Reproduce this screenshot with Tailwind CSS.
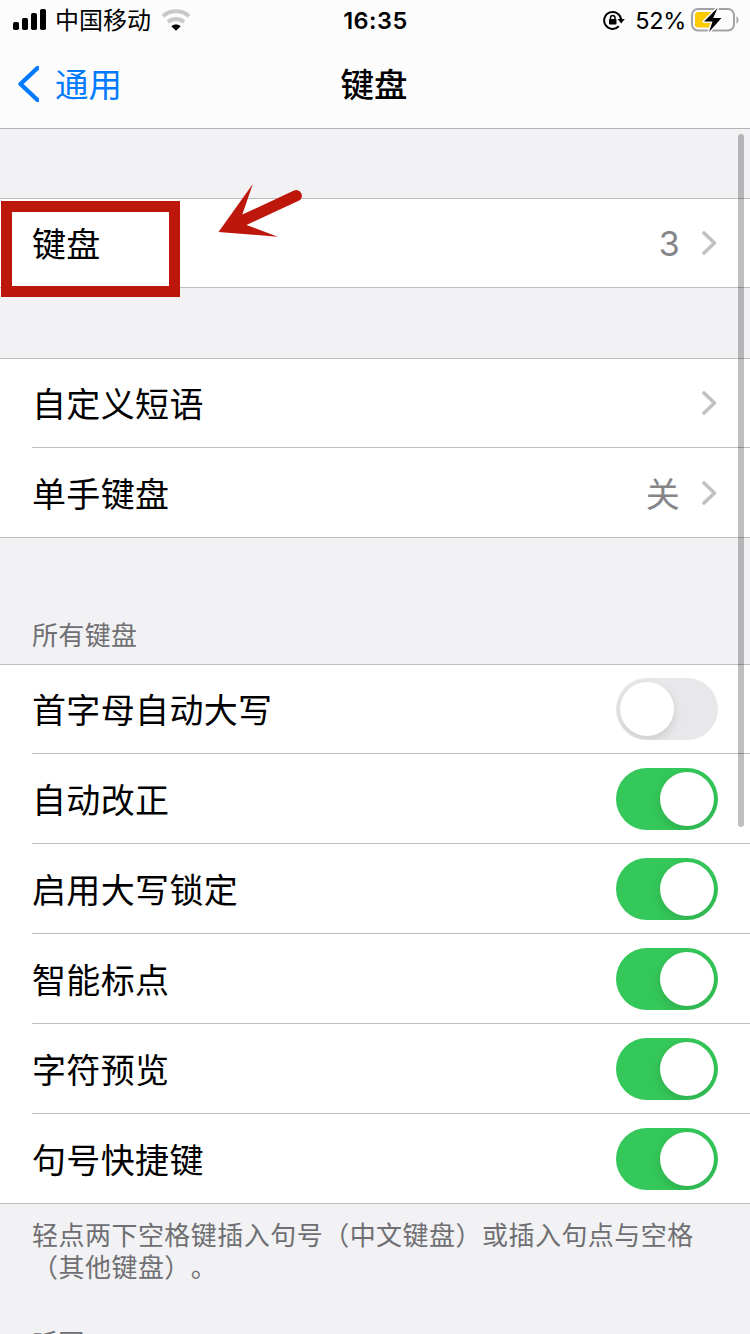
<!DOCTYPE html>
<html lang="zh-CN">
<head>
    <meta charset="UTF-8">
    <meta name="viewport" content="width=device-width, initial-scale=1.0">
    <title>键盘</title>
    <script src="https://cdn.jsdelivr.net/npm/@tailwindcss/browser@4"></script>
    <style>
        body {
            font-family: Inter, 'Noto Sans CJK SC', sans-serif;
            text-spacing-trim: space-all;
        }
    </style>
</head>
<body class="bg-[#f2f2f4] text-black">
    <div class="relative w-[750px] h-[1334px] overflow-hidden">

        <header class="h-[129px] bg-[#fcfcfd] border-b border-[#b2b2b4]">
            <!-- Status bar -->
            <div class="grid grid-cols-3 h-10 pl-3 pr-[11px] items-center">
                <div class="flex items-center">
                    <svg class="w-[34px] h-[22px]" viewBox="0 0 34 22">
                        <rect x="1" y="13" width="6" height="8" rx="1.8"/>
                        <rect x="10" y="9" width="6" height="12" rx="1.8"/>
                        <rect x="19" y="4" width="6" height="17" rx="1.8"/>
                        <rect x="28" y="0" width="6" height="21" rx="1.8"/>
                    </svg>
                    <span class="ml-[9px] pt-0.5 text-[24px] leading-[38px] whitespace-nowrap">中国移动</span>
                    <svg class="ml-[10px] w-[30px] h-[22px]" viewBox="0 0 30 22" fill="none">
                        <path d="M2 7.2C9.5 .6 20.5 .6 28 7.2" stroke="#c9c9ca" stroke-width="4"/>
                        <path d="M7 13C11.8 9 18.2 9 23 13" stroke="#c9c9ca" stroke-width="3.8"/>
                        <path d="M10.3 17.2C12.8 14.9 17.2 14.9 19.7 17.2L15 21.8Z" fill="#000"/>
                    </svg>
                </div>
                <div class="pt-0.5 text-center text-[23.5px] font-semibold leading-[38px] tracking-[0.5px]">16:35</div>
                <div class="flex items-center justify-end">
                    <svg class="w-[22px] h-[20px]" viewBox="0 0 22 20" fill="none">
                        <path d="M15.8 16.3A8.5 8.5 0 1 1 18.1 9.5" stroke="#000" stroke-width="2"/>
                        <path d="M14.6 9H21.8L18.2 13.6Z" fill="#000"/>
                        <rect x="6" y="9" width="7.5" height="5.5" rx=".8" fill="#000"/>
                        <path d="M7.5 9.5V7.7a2.25 2.25 0 0 1 4.5 0V9.5" stroke="#000" stroke-width="1.5"/>
                    </svg>
                    <span class="ml-[10px] pt-0.5 text-[23.5px] leading-[38px] tracking-[-0.3px]">52%</span>
                    <svg class="ml-[5px] w-[48px] h-[26px]" viewBox="0 0 48 26">
                        <rect x="1" y="2" width="42" height="21.5" rx="6" fill="none" stroke="#a3a3a5" stroke-width="2"/>
                        <rect x="4" y="5" width="18" height="15.5" rx="3" fill="#fecb02"/>
                        <path d="M45.5 9.2c2.6 1.5 2.6 6 0 7.5z" fill="#a3a3a5"/>
                        <path d="M26.5 1L13 14.5h8.5L18 25 30.5 11h-8.3z" fill="#000" stroke="#fcfcfd" stroke-width="3" stroke-linejoin="round" paint-order="stroke"/>
                    </svg>
                </div>
            </div>
            <!-- Nav bar -->
            <div class="grid grid-cols-3 h-[88px] items-center">
                <div class="flex items-center pl-[15px] text-[#007aff]">
                    <svg class="w-6 h-[38px]" viewBox="0 0 24 38" fill="none" stroke="currentColor" stroke-width="4.4" stroke-linecap="round" stroke-linejoin="round">
                        <path d="M22.5 3L5.5 19 22.5 35"/>
                    </svg>
                    <span class="ml-4 pt-0.5 text-[33.5px]">通用</span>
                </div>
                <h1 class="pt-0.5 pr-0.5 text-center text-[33.5px] font-medium">键盘</h1>
            </div>
        </header>

        <main class="text-[34px] tracking-[0.35px]">
            <section class="mt-[69px] bg-white">
                <div class="flex items-center justify-between h-[90px] pl-8 pr-[33px] border-y border-[#bebec1]">
                    <span class="pt-0.5">键盘</span>
                    <div class="flex items-center text-[#858588]">
                        <span>3</span>
                        <svg class="ml-[21px] w-4 h-[26px]" viewBox="0 0 16 26" fill="none" stroke="#c1c1c3" stroke-width="3.6" stroke-linecap="round" stroke-linejoin="round">
                            <path d="M3 3L13.5 13 3 23"/>
                        </svg>
                    </div>
                </div>
            </section>

            <section class="mt-[70px] bg-white">
                <div class="h-[90px] pl-8 border-t border-[#bebec1]">
                    <div class="flex items-center justify-between h-full pr-[33px] border-b border-[#bebec1]">
                        <span class="pt-0.5">自定义短语</span>
                        <svg class="w-4 h-[26px]" viewBox="0 0 16 26" fill="none" stroke="#c1c1c3" stroke-width="3.6" stroke-linecap="round" stroke-linejoin="round">
                            <path d="M3 3L13.5 13 3 23"/>
                        </svg>
                    </div>
                </div>
                <div class="flex items-center justify-between h-[90px] pl-8 pt-px pr-[33px] border-b border-[#bebec1]">
                    <span class="pt-0.5">单手键盘</span>
                    <div class="flex items-center text-[#858588]">
                        <span class="pt-0.5">关</span>
                        <svg class="ml-[21px] w-4 h-[26px]" viewBox="0 0 16 26" fill="none" stroke="#c1c1c3" stroke-width="3.6" stroke-linecap="round" stroke-linejoin="round">
                            <path d="M3 3L13.5 13 3 23"/>
                        </svg>
                    </div>
                </div>
            </section>

            <h2 class="mt-[78px] h-12 pl-8 pt-px text-[26px] leading-[38px] text-[#6f6f73]">所有键盘</h2>

            <section class="bg-white">
                <div class="h-[90px] pl-8 border-t border-[#bebec1]">
                    <div class="flex items-center justify-between h-full pr-8 border-b border-[#bebec1]">
                        <span class="pt-0.5">首字母自动大写</span>
                        <div class="flex w-[102px] h-[62px] p-1 rounded-full overflow-hidden bg-[#e8e8ea]">
                            <div class="size-[54px] rounded-full bg-white shadow-[0_4px_10px_rgba(0,0,0,0.12)]"></div>
                        </div>
                    </div>
                </div>
                <div class="h-[90px] pl-8 pt-px">
                    <div class="flex items-center justify-between h-full pr-8 border-b border-[#bebec1]">
                        <span class="pt-0.5">自动改正</span>
                        <div class="flex justify-end w-[102px] h-[62px] p-1 rounded-full overflow-hidden bg-[#34c759]">
                            <div class="size-[54px] rounded-full bg-white shadow-[0_4px_10px_rgba(0,0,0,0.12)]"></div>
                        </div>
                    </div>
                </div>
                <div class="h-[90px] pl-8 pt-px">
                    <div class="flex items-center justify-between h-full pr-8 border-b border-[#bebec1]">
                        <span class="pt-0.5">启用大写锁定</span>
                        <div class="flex justify-end w-[102px] h-[62px] p-1 rounded-full overflow-hidden bg-[#34c759]">
                            <div class="size-[54px] rounded-full bg-white shadow-[0_4px_10px_rgba(0,0,0,0.12)]"></div>
                        </div>
                    </div>
                </div>
                <div class="h-[90px] pl-8 pt-px">
                    <div class="flex items-center justify-between h-full pr-8 border-b border-[#bebec1]">
                        <span class="pt-0.5">智能标点</span>
                        <div class="flex justify-end w-[102px] h-[62px] p-1 rounded-full overflow-hidden bg-[#34c759]">
                            <div class="size-[54px] rounded-full bg-white shadow-[0_4px_10px_rgba(0,0,0,0.12)]"></div>
                        </div>
                    </div>
                </div>
                <div class="h-[90px] pl-8 pt-px">
                    <div class="flex items-center justify-between h-full pr-8 border-b border-[#bebec1]">
                        <span class="pt-0.5">字符预览</span>
                        <div class="flex justify-end w-[102px] h-[62px] p-1 rounded-full overflow-hidden bg-[#34c759]">
                            <div class="size-[54px] rounded-full bg-white shadow-[0_4px_10px_rgba(0,0,0,0.12)]"></div>
                        </div>
                    </div>
                </div>
                <div class="flex items-center justify-between h-[90px] pl-8 pt-px pr-8 border-b border-[#bebec1]">
                    <span class="pt-0.5">句号快捷键</span>
                    <div class="flex justify-end w-[102px] h-[62px] p-1 rounded-full overflow-hidden bg-[#34c759]">
                        <div class="size-[54px] rounded-full bg-white shadow-[0_4px_10px_rgba(0,0,0,0.12)]"></div>
                    </div>
                </div>
            </section>

            <p class="pl-8 pt-4 text-[26px] leading-8 tracking-[0.47px] text-[#6f6f73] whitespace-nowrap">轻点两下空格键插入句号（中文键盘）或插入句点与空格<br>（其他键盘）。</p>
            <h2 class="mt-[41px] pl-8 text-[26px] leading-[38px] text-[#6f6f73]">听写</h2>
        </main>

        <!-- Scroll indicator -->
        <div class="absolute left-[738px] top-[134px] w-1.5 h-[693px] rounded-full bg-black/25"></div>

        <!-- Highlight box and arrow -->
        <div class="absolute left-px top-[201px] w-[179px] h-24 border-[11px] border-[#bd170c]"></div>
        <svg class="absolute left-[210px] top-[180px] w-[100px] h-[60px]" viewBox="210 180 100 60" fill="#bd170c">
            <path d="M218.5 232L252.8 184 242.3 214.6 294 190.5A5.7 5.7 0 0 1 299.2 200.6L246.5 225 277.8 236.8Z"/>
        </svg>
    </div>
</body>
</html>
